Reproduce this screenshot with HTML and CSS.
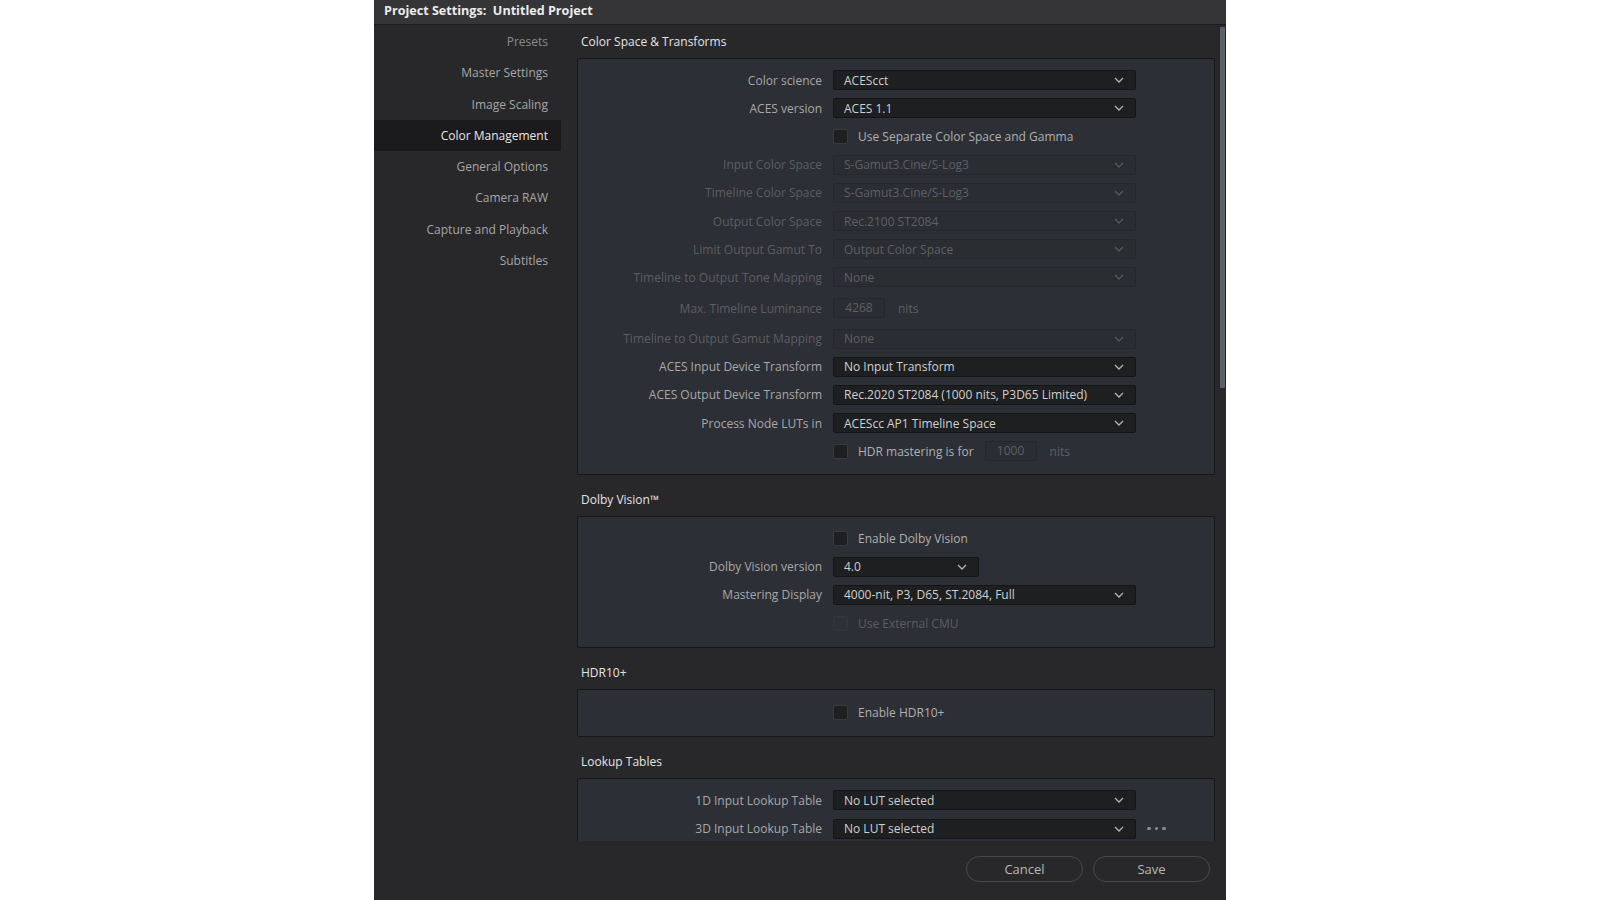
FILE: index.html
```html
<!DOCTYPE html>
<html lang="en">
<head>
<meta charset="utf-8">
<title>Project Settings</title>
<link rel="stylesheet" href="styles.css">
</head>
<body>
<div class="dialog">
  <div class="titlebar">Project Settings:&nbsp; Untitled Project</div>
  <div class="content">
    <nav class="sidebar">
      <div class="nav-item dim">Presets</div>
      <div class="nav-item">Master Settings</div>
      <div class="nav-item">Image Scaling</div>
      <div class="nav-item active">Color Management</div>
      <div class="nav-item">General Options</div>
      <div class="nav-item">Camera RAW</div>
      <div class="nav-item">Capture and Playback</div>
      <div class="nav-item">Subtitles</div>
    </nav>
    <div class="main">
      <div class="scroll">
        <section class="section">
          <div class="section-title">Color Space &amp; Transforms</div>
          <div class="box">
            <div class="row"><div class="label">Color science</div><div class="select"><span>ACEScct</span><svg class="chev" viewBox="0 0 10 6"><path d="M1 1L5 5L9 1"/></svg></div></div>
            <div class="row"><div class="label">ACES version</div><div class="select"><span>ACES 1.1</span><svg class="chev" viewBox="0 0 10 6"><path d="M1 1L5 5L9 1"/></svg></div></div>
            <div class="row"><div class="label"></div><div class="check"></div><div class="cb-text">Use Separate Color Space and Gamma</div></div>
            <div class="row off"><div class="label">Input Color Space</div><div class="select"><span>S-Gamut3.Cine/S-Log3</span><svg class="chev" viewBox="0 0 10 6"><path d="M1 1L5 5L9 1"/></svg></div></div>
            <div class="row off"><div class="label">Timeline Color Space</div><div class="select"><span>S-Gamut3.Cine/S-Log3</span><svg class="chev" viewBox="0 0 10 6"><path d="M1 1L5 5L9 1"/></svg></div></div>
            <div class="row off"><div class="label">Output Color Space</div><div class="select"><span>Rec.2100 ST2084</span><svg class="chev" viewBox="0 0 10 6"><path d="M1 1L5 5L9 1"/></svg></div></div>
            <div class="row off"><div class="label">Limit Output Gamut To</div><div class="select"><span>Output Color Space</span><svg class="chev" viewBox="0 0 10 6"><path d="M1 1L5 5L9 1"/></svg></div></div>
            <div class="row off"><div class="label">Timeline to Output Tone Mapping</div><div class="select"><span>None</span><svg class="chev" viewBox="0 0 10 6"><path d="M1 1L5 5L9 1"/></svg></div></div>
            <div class="row off tall"><div class="label">Max. Timeline Luminance</div><div class="num">4268</div><div class="unit">nits</div></div>
            <div class="row off"><div class="label">Timeline to Output Gamut Mapping</div><div class="select"><span>None</span><svg class="chev" viewBox="0 0 10 6"><path d="M1 1L5 5L9 1"/></svg></div></div>
            <div class="row"><div class="label">ACES Input Device Transform</div><div class="select"><span>No Input Transform</span><svg class="chev" viewBox="0 0 10 6"><path d="M1 1L5 5L9 1"/></svg></div></div>
            <div class="row"><div class="label">ACES Output Device Transform</div><div class="select"><span>Rec.2020 ST2084 (1000 nits, P3D65 Limited)</span><svg class="chev" viewBox="0 0 10 6"><path d="M1 1L5 5L9 1"/></svg></div></div>
            <div class="row"><div class="label">Process Node LUTs in</div><div class="select"><span>ACEScc AP1 Timeline Space</span><svg class="chev" viewBox="0 0 10 6"><path d="M1 1L5 5L9 1"/></svg></div></div>
            <div class="row"><div class="label"></div><div class="check"></div><div class="cb-text">HDR mastering is for</div><div class="num off-field">1000</div><div class="unit off-text">nits</div></div>
          </div>
        </section>

        <section class="section">
          <div class="section-title">Dolby Vision™</div>
          <div class="box dolby">
            <div class="row"><div class="label"></div><div class="check"></div><div class="cb-text">Enable Dolby Vision</div></div>
            <div class="row"><div class="label">Dolby Vision version</div><div class="select short"><span>4.0</span><svg class="chev" viewBox="0 0 10 6"><path d="M1 1L5 5L9 1"/></svg></div></div>
            <div class="row"><div class="label">Mastering Display</div><div class="select"><span>4000-nit, P3, D65, ST.2084, Full</span><svg class="chev" viewBox="0 0 10 6"><path d="M1 1L5 5L9 1"/></svg></div></div>
            <div class="row off"><div class="label"></div><div class="check"></div><div class="cb-text">Use External CMU</div></div>
          </div>
        </section>

        <section class="section">
          <div class="section-title">HDR10+</div>
          <div class="box single">
            <div class="row"><div class="label"></div><div class="check"></div><div class="cb-text">Enable HDR10+</div></div>
          </div>
        </section>

        <section class="section">
          <div class="section-title">Lookup Tables</div>
          <div class="box lut">
            <div class="row"><div class="label">1D Input Lookup Table</div><div class="select"><span>No LUT selected</span><svg class="chev" viewBox="0 0 10 6"><path d="M1 1L5 5L9 1"/></svg></div></div>
            <div class="row"><div class="label">3D Input Lookup Table</div><div class="select"><span>No LUT selected</span><svg class="chev" viewBox="0 0 10 6"><path d="M1 1L5 5L9 1"/></svg></div><div class="more"><i></i><i></i><i></i></div></div>
          </div>
        </section>
        <div class="scrollbar"></div>
      </div>
      <div class="footer">
        <button class="btn">Cancel</button>
        <button class="btn">Save</button>
      </div>
    </div>
  </div>
</div>
</body>
</html>
```

FILE: styles.css
```css
* { box-sizing: border-box; }
html, body { margin: 0; padding: 0; }
body {
  background: #ffffff;
  width: 1600px;
  height: 900px;
  overflow: hidden;
  font-family: "Open Sans", "Liberation Sans", sans-serif;
  font-size: 12px;
  color: #a8a8a8;
}
.dialog {
  width: 852px;
  height: 900px;
  margin: 0 auto;
  background: #28282b;
  display: flex;
  flex-direction: column;
}
.titlebar {
  height: 25px;
  flex: none;
  background: #353538;
  border-bottom: 1px solid #1c1c1e;
  color: #ececec;
  font-weight: 700;
  font-size: 12.6px;
  line-height: 21px;
  padding-left: 10px;
  white-space: nowrap;
}
.content {
  flex: 1;
  display: flex;
  min-height: 0;
}
.sidebar {
  width: 187px;
  flex: none;
  padding-top: 1px;
}
.nav-item {
  height: 31.3px;
  line-height: 31.3px;
  text-align: right;
  padding-right: 13px;
  color: #a6a6a6;
}
.nav-item.dim { color: #8a8a8a; }
.nav-item.active {
  background: #1b1b1d;
  color: #e6e6e6;
}
.main {
  flex: 1;
  display: flex;
  flex-direction: column;
  min-width: 0;
}
.scroll {
  height: 816px;
  flex: none;
  position: relative;
  overflow: hidden;
  padding: 0 11px 0 16px;
}
.scrollbar {
  position: absolute;
  right: 1px;
  top: 2px;
  width: 5px;
  height: 361px;
  background: #5c6068;
  border-radius: 1px;
}
.section + .section { margin-top: 8px; }
.section-title {
  height: 33px;
  display: flex;
  align-items: center;
  padding-left: 4px;
  padding-bottom: 1px;
  color: #e4e4e4;
  font-size: 12px;
}
.box {
  background: #2c2f35;
  border: 1px solid #161719;
  border-radius: 2px;
  padding: 7px 0 9px;
}
.box.dolby { padding-bottom: 10px; }
.box.single { padding: 8px 0 10px; }
.box.lut { padding-bottom: 20px; }
.row {
  height: 28.2px;
  display: flex;
  align-items: center;
}
.row.tall { height: 33px; }
.label {
  width: 244px;
  flex: none;
  margin-right: 11px;
  text-align: right;
  color: #a8a8a8;
  white-space: nowrap;
}
.select {
  width: 303px;
  height: 20px;
  flex: none;
  background: #1e1f21;
  border: 1px solid #141517;
  border-radius: 2px;
  padding: 0 11px 0 10px;
  display: flex;
  align-items: center;
  justify-content: space-between;
  color: #d0d0d0;
  white-space: nowrap;
}
.select.short { width: 146px; }
.chev {
  width: 10px;
  height: 6px;
  fill: none;
  stroke: #b4b4b4;
  stroke-width: 1.3;
}
.check {
  width: 15px;
  height: 15px;
  flex: none;
  background: #1e1f21;
  border: 1px solid #3a3b3e;
  border-radius: 2px;
  margin-right: 10px;
}
.cb-text {
  color: #b0b0b0;
  white-space: nowrap;
}
.num {
  width: 52px;
  height: 20px;
  flex: none;
  background: #2a2d32;
  border: 1px solid #25272b;
  border-radius: 2px;
  text-align: center;
  line-height: 18px;
  color: #5d6066;
}
.unit {
  margin-left: 13px;
  color: #5d6066;
}
.row .off-field { margin-left: 11px; }
.off-text { color: #5d6066; }
.row.off .label,
.row.off .cb-text { color: #5b5e63; }
.row.off .select {
  background: #2a2d32;
  border-color: #25272b;
  color: #5d6066;
}
.row.off .chev { stroke: #54575d; }
.row.off .check {
  background: #2e3137;
  border-color: #33363c;
}
.more {
  display: flex;
  gap: 4px;
  margin-left: 11px;
  align-items: center;
}
.more i {
  display: block;
  width: 3.5px;
  height: 3.5px;
  border-radius: 50%;
  background: #8c8c8f;
}
.footer {
  flex: 1;
  display: flex;
  justify-content: flex-end;
  align-items: flex-start;
  gap: 10px;
  padding: 15px 16px 0 0;
}
.btn {
  width: 117px;
  height: 26px;
  border: 1px solid #48484c;
  border-radius: 13px;
  background: #28282b;
  color: #b8b8b8;
  font-family: "Open Sans", "Liberation Sans", sans-serif;
  font-size: 13px;
  padding: 0;
}
```
